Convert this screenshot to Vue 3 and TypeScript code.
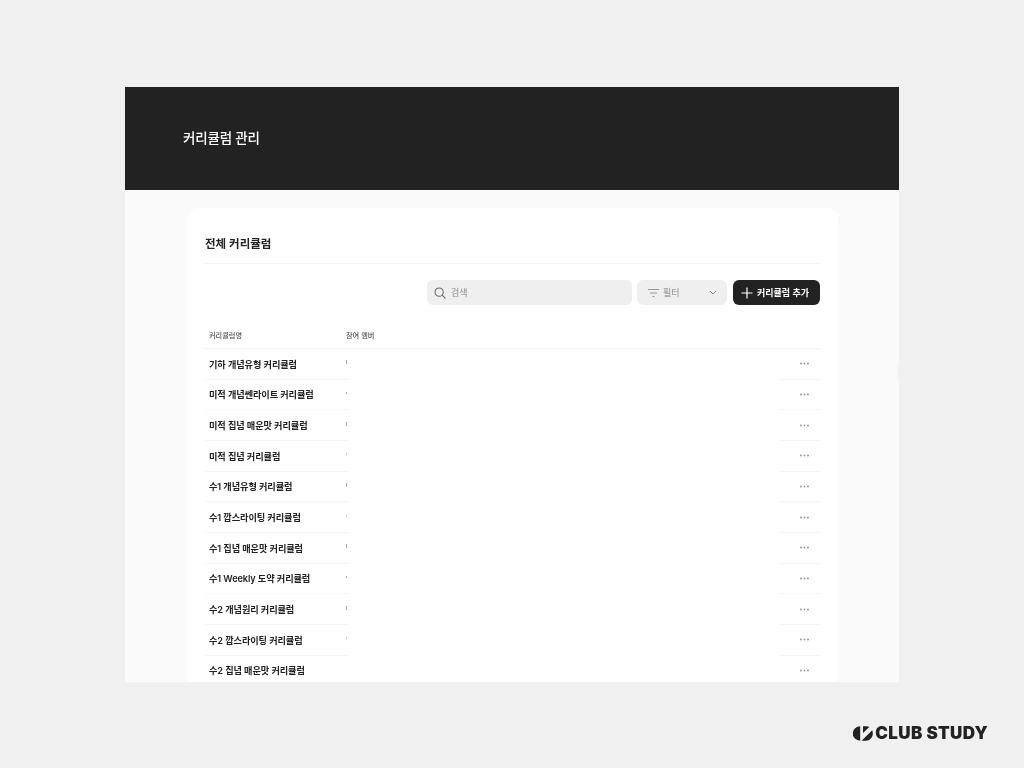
<template>
  <div class="page">
    <div class="frame">
      <header class="top">
        <h1>커리큘럼 관리</h1>
      </header>
      <main class="body">
        <section class="card">
          <h2 class="card-title">전체 커리큘럼</h2>
          <div class="toolbar">
            <label class="search">
              <svg width="12" height="12" viewBox="0 0 14 14" fill="none" stroke="#666" stroke-width="1.2">
                <circle cx="6" cy="6" r="4.8" />
                <path d="M9.5 9.5 13 13" stroke-linecap="round" />
              </svg>
              <span>검색</span>
            </label>
            <div class="filter">
              <svg width="13" height="10" viewBox="0 0 13 10" fill="none" stroke="#999" stroke-width="1">
                <path d="M1 1.5h11M3 5h7M5.5 8.5h2" />
              </svg>
              <span>필터</span>
              <svg class="chev" width="8" height="5" viewBox="0 0 8 5" fill="none" stroke="#888" stroke-width="1">
                <path d="M1 1l3 3 3-3" />
              </svg>
            </div>
            <button class="add">
              <svg width="12" height="12" viewBox="0 0 12 12" stroke="#fff" stroke-width="1.2">
                <path d="M6 .5v11M.5 6h11" />
              </svg>
              커리큘럼 추가
            </button>
          </div>
          <div class="thead">
            <span class="col-name">커리큘럼명</span>
            <span>참여 멤버</span>
          </div>
          <div v-for="row in rows" :key="row.name" class="row">
            <div class="left">
              <span class="col-name name">{{ row.name }}</span>
              <i class="tick" :class="row.tick"></i>
            </div>
            <div class="actions">
              <svg width="9" height="3" viewBox="0 0 9 3" fill="#999">
                <circle cx="1" cy="1.5" r="1" />
                <circle cx="4.5" cy="1.5" r="1" />
                <circle cx="8" cy="1.5" r="1" />
              </svg>
            </div>
          </div>
        </section>
      </main>
      <div class="scroll-tab"></div>
    </div>
    <footer class="brand">
      <svg width="20" height="15" viewBox="0 0 20 15" fill="#222">
        <path d="M7.2 .3A7.4 7.2 0 0 0 7.2 14.7Z" />
        <path d="M10 .3h3.5c1 0 2 .3 2.8.8L10 7Z" />
        <path d="M19.2 4.2c.4 1 .6 2.1.6 3.3 0 4-3 7.2-6.8 7.2H8.6Z" />
      </svg>
      <span>CLUB STUDY</span>
    </footer>
  </div>
</template>

<script setup lang="ts">
type Row = {
  name: string
  tick: string
}

const rows: Row[] = [
  { name: '기하 개념유형 커리큘럼', tick: 'tall' },
  { name: '미적 개념쎈라이트 커리큘럼', tick: 'short' },
  { name: '미적 집념 매운맛 커리큘럼', tick: 'tall' },
  { name: '미적 집념 커리큘럼', tick: 'faint' },
  { name: '수1 개념유형 커리큘럼', tick: 'tall' },
  { name: '수1 깝스라이팅 커리큘럼', tick: 'faint' },
  { name: '수1 집념 매운맛 커리큘럼', tick: 'tall' },
  { name: '수1 Weekly 도약 커리큘럼', tick: 'short' },
  { name: '수2 개념원리 커리큘럼', tick: 'tall' },
  { name: '수2 깝스라이팅 커리큘럼', tick: 'faint' },
  { name: '수2 집념 매운맛 커리큘럼', tick: 'none' },
]
</script>

<style>
html,
body {
  margin: 0;
  background: #f0f0f0;
}
</style>

<style scoped>
.page {
  width: 1024px;
  height: 768px;
  overflow: hidden;
  background: #f0f0f0;
  padding-top: 87px;
  box-sizing: border-box;
  font-family: Inter, 'Noto Sans CJK KR', sans-serif;
  color: #222;
  filter: blur(0.3px);
}

.frame {
  position: relative;
  width: 774px;
  height: 595px;
  margin-left: 125px;
  overflow: hidden;
  background: #fafafa;
}

.top {
  height: 103px;
  background: #222;
  display: flex;
  align-items: center;
  padding: 0 0 3px 58px;
  box-sizing: border-box;
}

.top h1 {
  margin: 0;
  color: #fff;
  font-size: 13.5px;
  font-weight: 500;
  letter-spacing: -0.2px;
}

.body {
  padding: 18px 61px 0 62px;
}

.card {
  background: #fff;
  border-radius: 12px;
  padding: 0 18px;
  height: 600px;
}

.card-title {
  margin: 0;
  height: 56px;
  line-height: 72px;
  box-sizing: border-box;
  border-bottom: 1px solid #f3f3f3;
  font-size: 11.5px;
  font-weight: 600;
}

.toolbar {
  display: flex;
  justify-content: flex-end;
  gap: 5px;
  margin-top: 16px;
  height: 25px;
}

.search,
.filter {
  display: flex;
  align-items: center;
  background: #efefef;
  border-radius: 6px;
  font-size: 9px;
  font-weight: 500;
  color: #a0a0a0;
}

.search {
  width: 205px;
  padding-left: 7px;
  gap: 5px;
  box-sizing: border-box;
}

.filter {
  width: 90px;
  padding-left: 10px;
  gap: 3px;
  box-sizing: border-box;
}

.chev {
  margin-left: auto;
  margin-right: 10px;
}

.add {
  width: 87px;
  margin-left: 1px;
  display: flex;
  align-items: center;
  gap: 4px;
  padding: 0 0 0 8px;
  border: 0;
  border-radius: 6px;
  background: #222;
  color: #fff;
  font-family: inherit;
  font-size: 9px;
  font-weight: 600;
  white-space: nowrap;
}

.thead {
  display: flex;
  align-items: center;
  height: 44px;
  padding-top: 17px;
  box-sizing: border-box;
  border-bottom: 1px solid #f3f3f3;
  font-size: 7.2px;
  font-weight: 500;
  color: #555;
}

.col-name {
  display: block;
  width: 137px;
  padding-left: 4px;
  flex: none;
  box-sizing: content-box;
}

.row {
  display: flex;
  justify-content: space-between;
  height: 30.67px;
}

.left,
.actions {
  display: flex;
  align-items: center;
  box-sizing: border-box;
  border-bottom: 1px solid #f6f6f6;
}

.left {
  width: 144px;
}

.actions {
  width: 40px;
  justify-content: center;
  padding-left: 9px;
  padding-right: 1px;
}

.name {
  font-size: 9.2px;
  font-weight: 600;
  letter-spacing: -0.1px;
  white-space: nowrap;
}

.tick {
  display: block;
  width: 1px;
  margin-bottom: 3px;
  background: #aaa;
}

.tick.tall {
  height: 4px;
}

.tick.short {
  height: 2px;
}

.tick.faint {
  height: 2px;
  background: #ccc;
}

.tick.none {
  display: none;
}

.scroll-tab {
  position: absolute;
  right: 0;
  top: 275px;
  width: 2px;
  height: 20px;
  border-radius: 2px 0 0 2px;
  background: #f4f4f4;
}

.brand {
  display: flex;
  align-items: center;
  justify-content: flex-end;
  gap: 2px;
  margin-top: 41px;
  padding-right: 36px;
  font-family: Inter, sans-serif;
  font-size: 17px;
  font-weight: 900;
  letter-spacing: 0.35px;
  color: #222;
}
</style>
